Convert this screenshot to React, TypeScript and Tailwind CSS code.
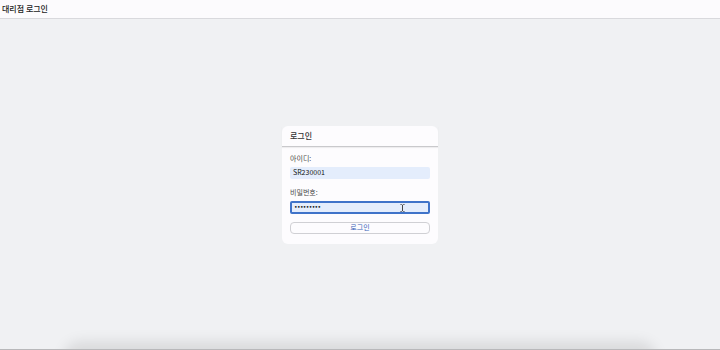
import React from "react";

export default function App() {
  const font = { fontFamily: '"Noto Sans CJK KR", "Noto Sans", sans-serif' };
  return (
    <div className="relative w-[720px] h-[350px] overflow-hidden bg-[#f0f1f3] flex flex-col" style={font}>
      <div className="h-[19px] shrink-0 bg-[#fcfbfd] border-b border-[#d9d9dd] flex items-center pl-[2px]">
        <span className="text-[8px] leading-none text-[#222] font-medium">대리점 로그인</span>
      </div>
      <div className="flex-1 flex items-center justify-center">
        <div className="w-[156px] bg-[#fdfcfe] rounded-[6px] flex flex-col">
          <div className="h-[21px] flex items-center px-[8px] border-b border-[#c9c9cc] shadow-[0_1px_1px_rgba(0,0,0,0.06)]">
            <span className="text-[8px] leading-none text-[#333] font-medium">로그인</span>
          </div>
          <div className="flex flex-col px-[8px] pt-[7px] pb-[10px]">
            <label className="text-[7px] leading-none text-[#4a4a4a] h-[9px] flex items-center">아이디:</label>
            <div className="mt-[4px] h-[12px] bg-[#e4edfc] rounded-[2px] flex items-center px-[3px]">
              <span className="text-[7px] leading-none text-[#111]">SR230001</span>
            </div>
            <label className="mt-[9px] text-[7px] leading-none text-[#4a4a4a] h-[9px] flex items-center">비밀번호:</label>
            <div className="relative mt-[4px] h-[13px] bg-[#e4edfc] rounded-[2px] border-2 border-[#3f73c9] flex items-center px-[2px]">
              <span className="text-[6px] leading-none text-[#111] tracking-[-0.6px]" style={{ fontFamily: '"DejaVu Sans", sans-serif' }}>•••••••••</span>
              <svg className="absolute left-[108px] top-[1px]" width="5" height="8" viewBox="0 0 5 8">
                <path d="M0.5 0.5h1.2M3.3 0.5h1.2M2.5 0.8v6.4M0.5 7.5h1.2M3.3 7.5h1.2" stroke="#333" strokeWidth="0.9" fill="none" />
              </svg>
            </div>
            <button className="mt-[8px] h-[12px] rounded-[4px] border border-[#d0d0d4] bg-[#fdfcfe] flex items-center justify-center">
              <span className="text-[7px] leading-none text-[#3b63b8]">로그인</span>
            </button>
          </div>
        </div>
      </div>
      <div className="absolute left-[70px] right-[70px] top-[352px] h-[20px] rounded-[10px] shadow-[0_-4px_14px_6px_rgba(0,0,0,0.10)] bg-[#e5e5e6]"></div>
      <div className="absolute left-0 right-0 bottom-0 h-[1px] bg-[#b8b8ba]"></div>
    </div>
  );
}
